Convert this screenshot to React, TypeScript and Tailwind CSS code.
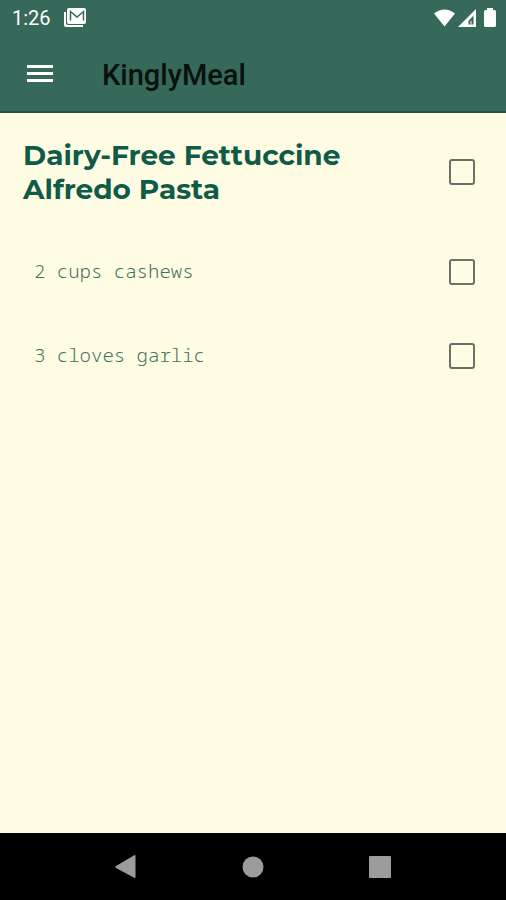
import { useState } from 'react';

const ingredients = ['2 cups cashews', '3 cloves garlic'];

const boxStyle =
  'block h-[26px] w-[26px] shrink-0 appearance-none rounded-[3px] border-[2px] border-[#6f6f69] checked:bg-[#0f5b48]';

function StatusBar() {
  return (
    <div className="flex h-9 items-center justify-between pr-[9px] pl-3 text-white">
      <div className="flex items-center gap-3">
        <span className="text-[20px] leading-6">1:26</span>
        <svg className="h-6 w-6" viewBox="0 0 24 24" fill="none">
          <path d="M1 6v13q0 2 2 2h17v-2H5q-2 0-2-2V6z" fill="#fff" />
          <rect x="4" y="2" width="19" height="16" rx="2" fill="#fff" />
          <path d="M7.500 14.500V5.500l6.500 5.500 6.500-5.500v9" stroke="#356859" strokeWidth="1.500" />
        </svg>
      </div>
      <div className="flex items-center gap-[3px]">
        <svg className="h-5 w-[21px]" viewBox="0 0 21 20">
          <path d="M10.500 18.500 0 5.500Q10.500-2.500 21 5.500z" fill="#fff" />
        </svg>
        <svg className="h-5 w-[18px]" viewBox="0 0 18 20">
          <path fillRule="evenodd" d="M18 1v18H0zM15.500 7.500l-5 5.500v3.500h5z" fill="#fff" />
          <path d="M12.500 13h1v3.500h-1z" fill="#fff" />
        </svg>
        <svg className="ml-1 h-5 w-[14px]" viewBox="0 0 14 20">
          <path d="M4 0h6v2h1.500Q13 2 13 3.500v14q0 1.500-1.500 1.500h-9Q1 19 1 17.500v-14Q1 2 2.500 2H4z" fill="#fff" />
        </svg>
      </div>
    </div>
  );
}

export default function App() {
  const [checked, setChecked] = useState<string[]>([]);

  const toggle = (name: string) => {
    setChecked(checked.includes(name) ? checked.filter((c) => c !== name) : [...checked, name]);
  };

  return (
    <div className="flex min-h-screen flex-col bg-[#fffce4] font-['Roboto',sans-serif]">
      <header className="border-b-2 border-[#1b5443] bg-[#37695a]">
        <StatusBar />
        <div className="flex h-[75px] items-center gap-12 px-[26px]">
          <button type="button" aria-label="Open menu">
            <svg className="h-5 w-7" viewBox="0 0 28 20" fill="#fff">
              <rect x="1" y="1" width="26" height="3" />
              <rect x="1" y="8" width="26" height="3" />
              <rect x="1" y="15" width="26" height="3" />
            </svg>
          </button>
          <h1 className="pt-[2px] text-[29px] leading-8 font-medium text-[#07110e]">KinglyMeal</h1>
        </div>
      </header>

      <main className="grow">
        <div className="flex h-[118px] items-center justify-between pr-[31px] pl-[23px]">
          <label
            htmlFor="recipe"
            className="max-w-[340px] font-['Montserrat','Inter',sans-serif] text-[28px] leading-[34px] font-bold text-[#0f5b48]"
          >
            Dairy-Free Fettuccine Alfredo Pasta
          </label>
          <input
            id="recipe"
            type="checkbox"
            className={boxStyle}
            checked={checked.includes('recipe')}
            onChange={() => toggle('recipe')}
          />
        </div>
        <ul>
          {ingredients.map((name) => (
            <li key={name} className="flex h-[84px] items-center justify-between pr-[31px] pb-[2px] pl-[34px]">
              <label
                htmlFor={name}
                className="pb-[2px] font-['Noto_Sans_Mono','Liberation_Mono',monospace] text-[19px] leading-6 font-light text-[#3f7160]"
              >
                {name}
              </label>
              <input
                id={name}
                type="checkbox"
                className={boxStyle}
                checked={checked.includes(name)}
                onChange={() => toggle(name)}
              />
            </li>
          ))}
        </ul>
      </main>

      <nav className="flex h-[67px] items-center justify-center gap-[103px] bg-black text-[#9c9c9c]">
        <button type="button" aria-label="Back">
          <svg className="h-6 w-6" viewBox="0 0 24 24" fill="currentColor">
            <path d="M21.500 1v21q0 1.500-1.300.700L2 13q-1.500-1 0-2L20.200.300q1.300-.800 1.300.700z" />
          </svg>
        </button>
        <button type="button" aria-label="Home">
          <svg className="h-6 w-6" viewBox="0 0 24 24" fill="currentColor">
            <circle cx="12" cy="12" r="10.500" />
          </svg>
        </button>
        <button type="button" aria-label="Recent apps">
          <svg className="h-6 w-6" viewBox="0 0 24 24" fill="currentColor">
            <rect x="1" y="1" width="22" height="22" rx="1" />
          </svg>
        </button>
      </nav>
    </div>
  );
}
